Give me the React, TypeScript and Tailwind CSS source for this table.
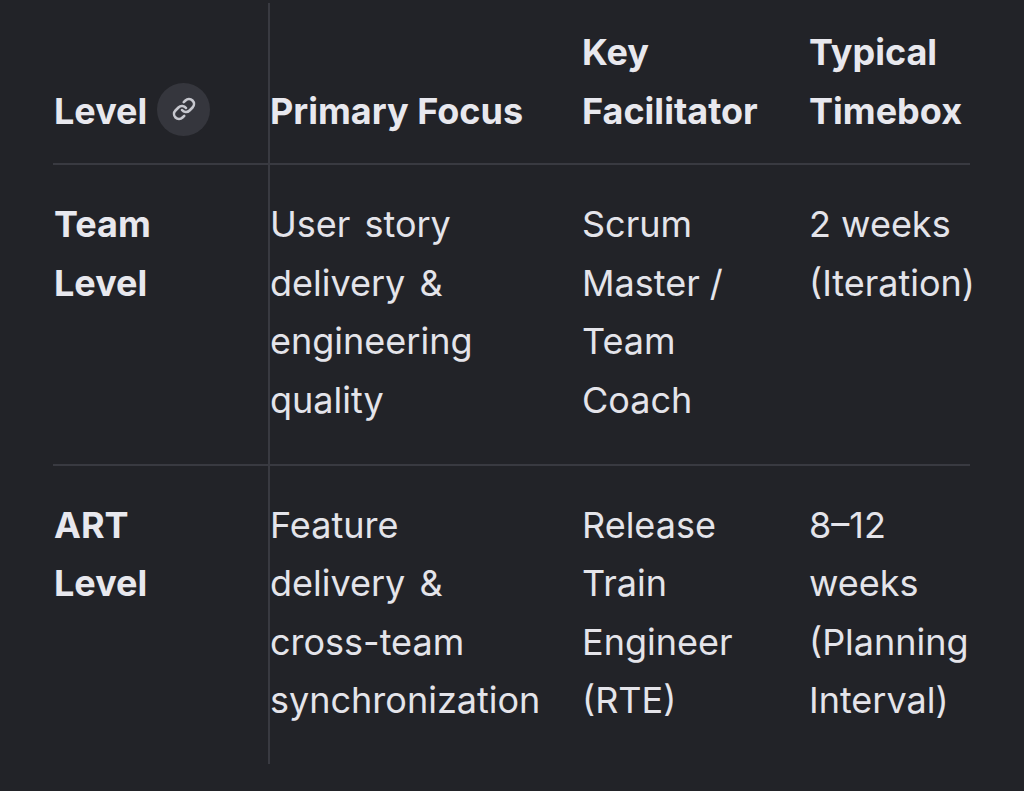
import { Link } from "lucide-react";

type Row = {
  level: string;
  focus: string;
  facilitator: string;
  timebox: string;
};

const rows: Row[] = [
  {
    level: "Team Level",
    focus: "User story delivery & engineering quality",
    facilitator: "Scrum Master / Team Coach",
    timebox: "2 weeks (Iteration)",
  },
  {
    level: "ART Level",
    focus: "Feature delivery & cross-team synchronization",
    facilitator: "Release Train Engineer (RTE)",
    timebox: "8–12 weeks (Planning Interval)",
  },
];

export default function App() {
  return (
    <div
      className="min-h-[791px] w-full bg-[#222328] pt-[3px] text-[#e4e4ea]"
      style={{ fontFamily: "Inter, 'Noto Sans', sans-serif" }}
    >
      <div className="ml-[53px] w-[920px] overflow-hidden">
        {/* header */}
        <div className="flex w-[917px] border-b-2 border-[#393a41] text-[36px] font-bold leading-[58.6px] text-[#e8e8ee]">
          <div className="flex w-[217px] shrink-0 items-end border-r-2 border-[#393a41] pb-[23px] pl-[1px] pt-[20px]">
            <div className="flex items-center gap-[10px]">
              <span>Level</span>
              <span className="mb-[3px] flex h-[53px] w-[53px] items-center justify-center rounded-full bg-[#35363d]">
                <Link size={24} strokeWidth={2.6} className="text-[#c6c7ce]" />
              </span>
            </div>
          </div>
          <div className="flex w-[312px] shrink-0 items-end pb-[23px] pr-[41px] pt-[20px]">Primary Focus</div>
          <div className="flex w-[227px] shrink-0 items-end pb-[23px] pr-[28px] pt-[20px]">Key Facilitator</div>
          <div className="flex min-w-0 flex-1 items-end pb-[23px] pt-[20px]">Typical Timebox</div>
        </div>

        {rows.map((row, i) => (
          <div
            key={row.level}
            className={
              i < rows.length - 1
                ? "flex w-[917px] border-b-2 border-[#393a41] text-[36px] leading-[58.6px]"
                : "flex w-[917px] text-[36px] leading-[58.6px]"
            }
          >
            <div className="w-[217px] shrink-0 border-r-2 border-[#393a41] pb-[34px] pl-[1px] pr-[52px] pt-[30px] font-bold text-[#e8e8ee]">
              {row.level}
            </div>
            <div className="w-[312px] shrink-0 pb-[34px] pr-[41px] pt-[30px] [word-spacing:4px]">{row.focus}</div>
            <div className="w-[227px] shrink-0 pb-[34px] pr-[28px] pt-[30px]">{row.facilitator}</div>
            <div className="min-w-0 flex-1 pb-[34px] pt-[30px]">{row.timebox}</div>
          </div>
        ))}
      </div>
    </div>
  );
}
